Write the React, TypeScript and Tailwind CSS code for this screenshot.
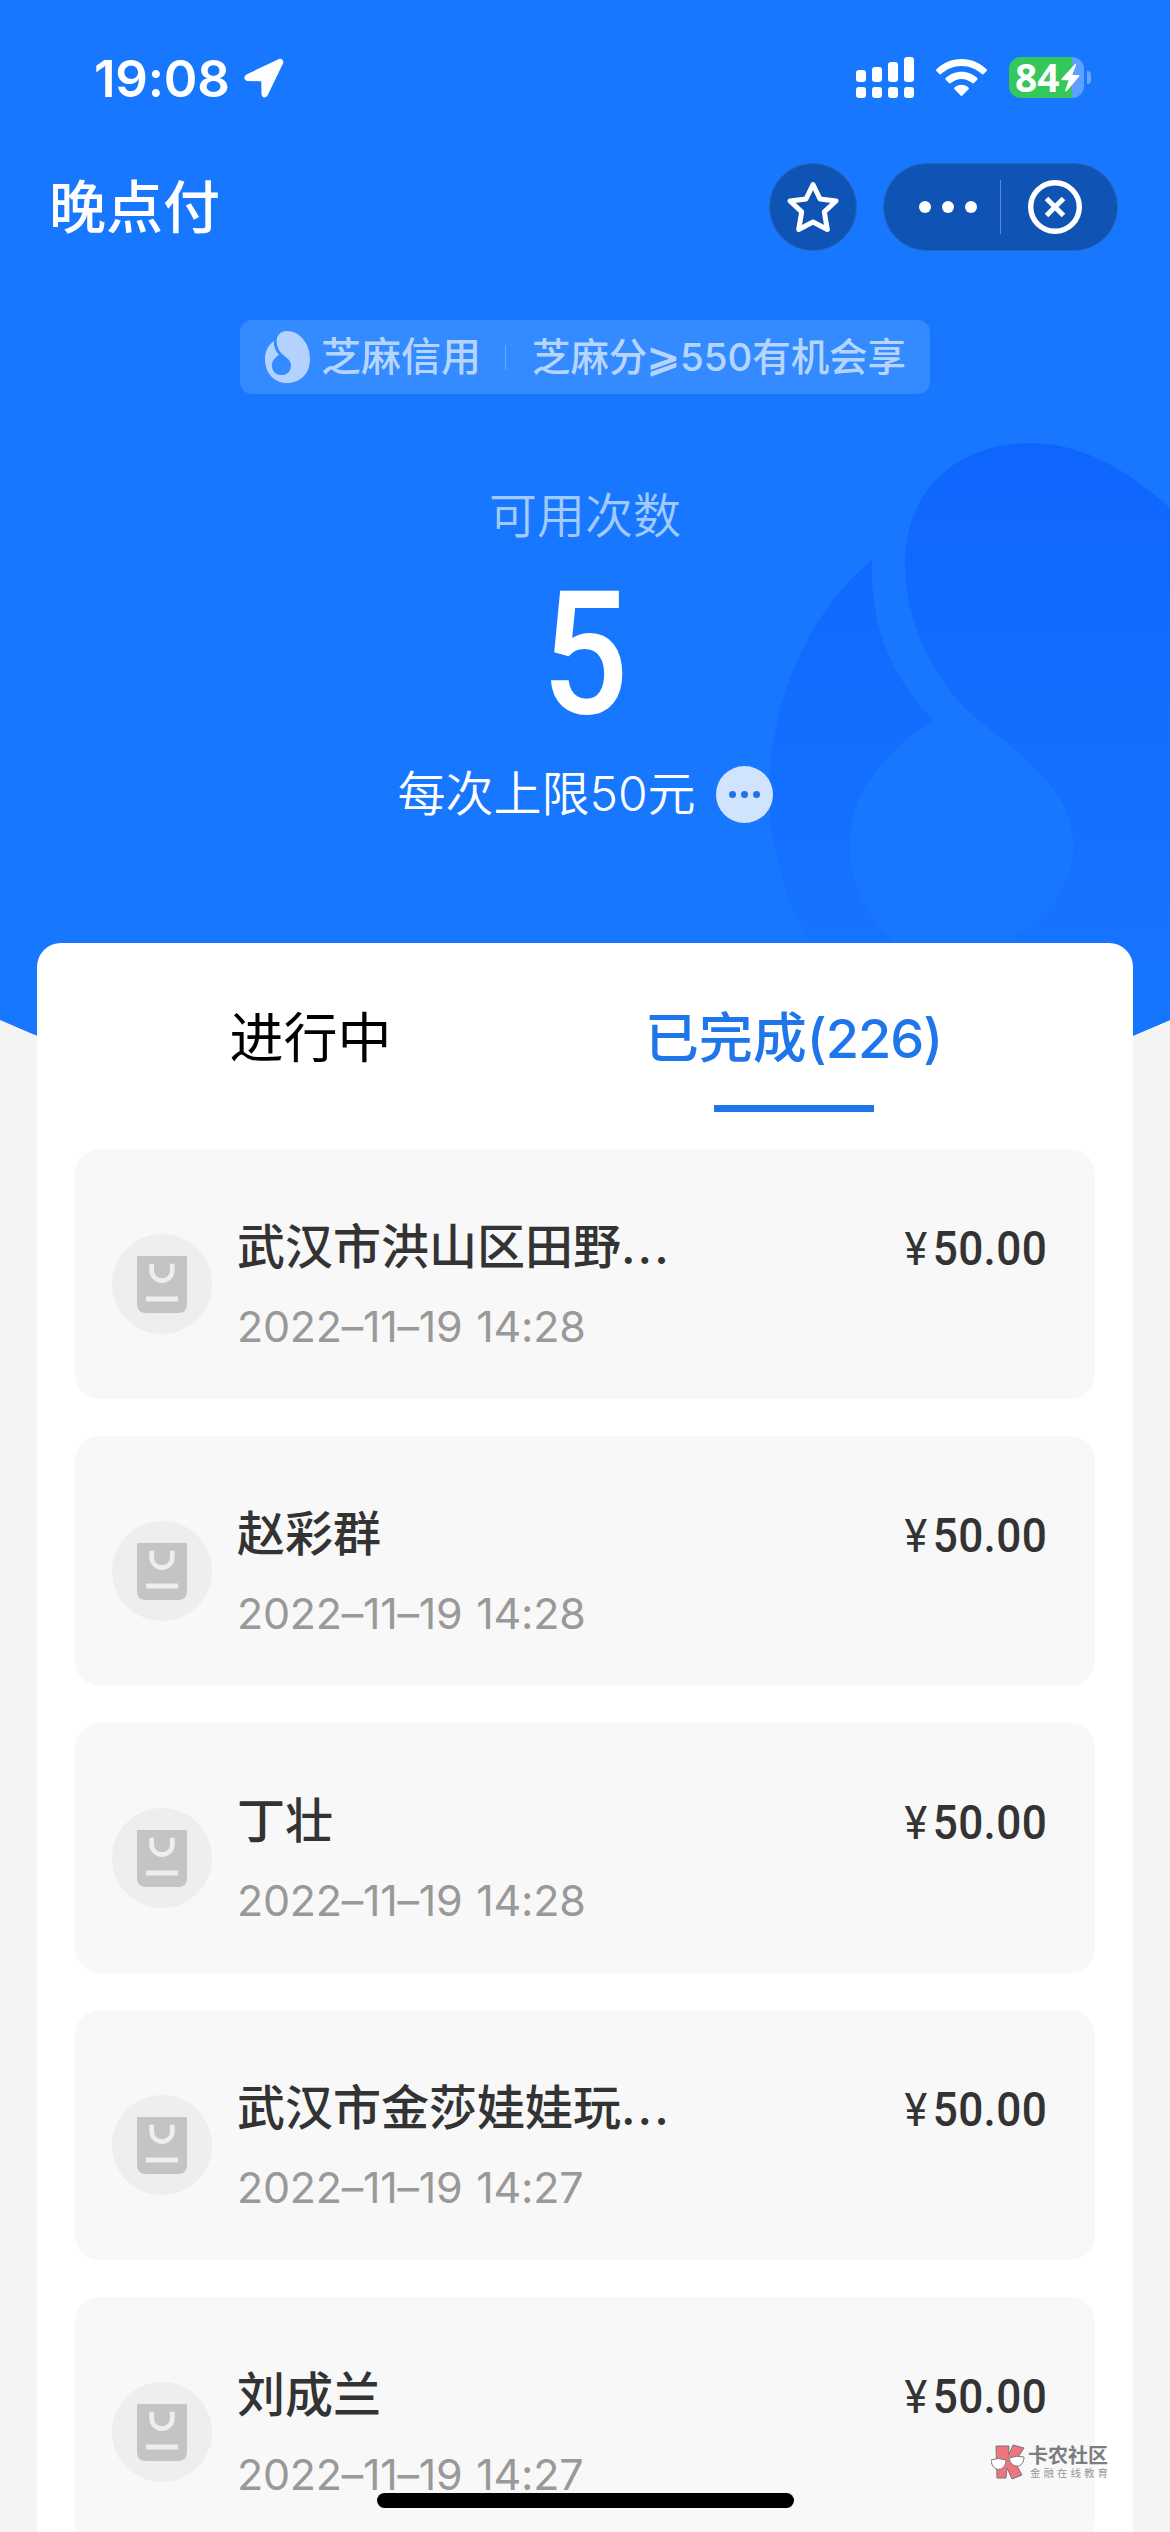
import React from 'react';

interface Order {
  name: string;
  truncated?: boolean;
  time: string;
  amount: string;
}

const orders: Order[] = [
  { name: '武汉市洪山区田野', truncated: true, time: '2022–11–19 14:28', amount: '50.00' },
  { name: '赵彩群', time: '2022–11–19 14:28', amount: '50.00' },
  { name: '丁壮', time: '2022–11–19 14:28', amount: '50.00' },
  { name: '武汉市金莎娃娃玩', truncated: true, time: '2022–11–19 14:27', amount: '50.00' },
  { name: '刘成兰', time: '2022–11–19 14:27', amount: '50.00' },
];

function StatusBar() {
  return (
    <div className="flex h-[156px] items-start justify-between pt-[57px] pr-[79px] pl-[94px]">
      <div className="flex h-[42px] items-center">
        <span className="w-[150px] text-[51px] leading-none font-semibold tracking-[-0.2px] whitespace-nowrap">19:08</span>
        <svg width="40" height="40" viewBox="0 0 40 40" fill="white">
          <path d="M34.5 1.2 3 16.2c-4 2-3.2 6.6 1 6.8l12.5.2c.6 0 .8.3.8.8L17.5 36c.2 4.3 4.7 4.6 6.3 1L39 5.5C40.2 2.4 37.6-.2 34.5 1.2Z" />
        </svg>
      </div>
      <div className="flex h-[41px] items-start">
        <svg width="58" height="41" viewBox="0 0 58 41" fill="white">
          <rect x="0" y="13" width="10" height="12" rx="3" />
          <rect x="16" y="10" width="10" height="15" rx="3" />
          <rect x="32" y="5" width="10" height="20" rx="3" />
          <rect x="48" y="0" width="10" height="25" rx="3" />
          <rect x="0" y="30" width="10" height="11" rx="3" />
          <rect x="16" y="30" width="10" height="11" rx="3" />
          <rect x="32" y="30" width="10" height="11" rx="3" />
          <rect x="48" y="30" width="10" height="11" rx="3" />
        </svg>
        <svg className="mt-[2px] ml-[22px]" width="51" height="38" viewBox="0 0 51 38" fill="white">
          <path d="M25.5 0C15.5 0 7 4 .5 10.2c-.7.6-.7 1.2-.1 1.8l3 3.1c.6.5 1.1.5 1.7 0C10.8 10 17.5 7 25.5 7s14.7 3 20.4 8.1c.6.5 1.1.5 1.7 0l3-3.1c.6-.6.6-1.2-.1-1.8C44 4 35.5 0 25.5 0Z" />
          <path d="M25.5 12.8c-6.2 0-11.6 2.4-15.7 6.2-.6.6-.6 1.2 0 1.8l3.2 3.3c.6.6 1.2.6 1.8 0 3-2.6 6.5-4.2 10.7-4.2s7.7 1.6 10.7 4.2c.6.6 1.2.6 1.8 0l3.2-3.3c.6-.6.6-1.2 0-1.8-4.1-3.8-9.5-6.2-15.7-6.2Z" />
          <path d="M25.5 25.8c-2.7 0-5 1-6.9 2.6-.7.6-.7 1.2-.1 1.8l6.1 6.3c.6.6 1.2.6 1.8 0l6.1-6.3c.6-.6.6-1.2-.1-1.8-1.9-1.6-4.2-2.6-6.9-2.6Z" />
        </svg>
        <div className="ml-[22px] flex h-[41px] items-center">
          <div className="flex h-[41px] w-[75px] items-center rounded-[12px] bg-linear-to-r from-[#34c759] from-84% to-[#5ea0ff] to-84% pl-[6px]">
            <span className="w-[46px] pb-[2px] font-['Noto_Sans',sans-serif] text-[39px] leading-[39px] font-bold">84</span>
            <svg width="19" height="28" viewBox="0 0 19 28" fill="white">
              <path d="M13.6.4.8 14.6c-.8 1-.5 1.7.6 1.7h6.2L4.3 26c-.4 1.4.6 1.8 1.5.9L18 12.7c.8-1 .5-1.8-.6-1.8h-6.2L15 1.3c.4-1.2-.5-1.8-1.4-.9Z" />
            </svg>
          </div>
          <div className="ml-[3px] h-[13px] w-[4px] rounded-r-full bg-white/35" />
        </div>
      </div>
    </div>
  );
}

function NavBar() {
  return (
    <div className="flex h-[102px] items-center justify-between pr-[52px] pl-[49px]">
      <h1 className="pt-[2px] text-[57px] leading-[80px] font-medium">晚点付</h1>
      <div className="flex items-center gap-[26px]">
        <div className="flex size-[88px] items-center justify-center rounded-full border border-[#2b62b3] bg-[#0f54b4]">
          <svg width="54" height="54" viewBox="0 0 54 54" fill="none" stroke="white" strokeWidth="5" strokeLinejoin="round">
            <path d="m27 4.5 7 14.5 16 2-11.7 10.8L41.3 49.5 27 42 12.7 49.5l3-17.7L4 21l16-2Z" />
          </svg>
        </div>
        <div className="flex h-[88px] w-[235px] items-center rounded-full border border-[#2b62b3] bg-[#0f54b4]">
          <div className="flex flex-1 items-center justify-center gap-[11px] pl-[12px]">
            <span className="size-[12px] rounded-full bg-white" />
            <span className="size-[12px] rounded-full bg-white" />
            <span className="size-[12px] rounded-full bg-white" />
          </div>
          <div className="h-[54px] w-px bg-[#5b8bd0]" />
          <div className="flex w-[116px] pl-[27px]">
            <svg width="54" height="54" viewBox="0 0 54 54" fill="none" stroke="white">
              <circle cx="27" cy="27" r="24.3" strokeWidth="5.4" />
              <path d="m18.5 18.5 17 17m0-17-17 17" strokeWidth="5" />
            </svg>
          </div>
        </div>
      </div>
    </div>
  );
}

function CreditBadge() {
  return (
    <div className="flex h-[74px] w-[690px] items-center rounded-[12px] bg-[#348aff] pl-[25px] text-[#b5d5ff]">
      <svg width="45" height="52" viewBox="0 0 45 52" fill="#b3d2ff">
        <path d="M22 0C35 0 45 13 45 28C45 43 35 52 22 52C9 52 0 42 0 28C0 20 3.5 14 8.8 10C8.6 15.5 10.3 20 14 23.7C10 26.5 6.9 29.7 6.9 34.4C6.9 40 11 44 16.5 44S26 40 26 34.4C26 30 22.8 27.5 17.4 23.3C13.7 19.8 11.6 15.1 11.6 10.3C11.6 4 16 0 22 0Z" />
      </svg>
      <span className="ml-[11px] w-[160px] text-[40px] leading-none font-medium whitespace-nowrap">芝麻信用</span>
      <div className="ml-[24px] h-[25px] w-px bg-[#6aa9ff]" />
      <span className="ml-[26px] text-[38.5px] leading-none font-medium tracking-[-0.1px] whitespace-nowrap">
        芝麻分<span className="font-bold">⩾</span>550有机会享
      </span>
    </div>
  );
}

function BagIcon() {
  return (
    <div className="flex size-[100px] shrink-0 items-center justify-center rounded-full bg-[#eeeeee]">
      <svg width="50" height="57" viewBox="0 0 50 57" fill="none">
        <path d="M1 0h48q1 0 1 1v47q0 9-9 9H9q-9 0-9-9V1q0-1 1-1Z" fill="#c4c4c4" />
        <path d="M14.7 7.7v6.7a10.3 10.3 0 0 0 20.6 0V7.7" stroke="#eeeeee" strokeWidth="4.7" />
        <path d="M9 43h32" stroke="#eeeeee" strokeWidth="5" />
      </svg>
    </div>
  );
}

function OrderRow({ name, truncated, time, amount }: Order) {
  return (
    <div className="flex h-[250px] shrink-0 items-start rounded-[25px] bg-[#f8f8f8] pr-[48px] pl-[37px]">
      <div className="mt-[85px]">
        <BagIcon />
      </div>
      <div className="mt-[66px] ml-[25px] flex-1">
        <p className="text-[48px] leading-[64px] font-medium text-[#333333]">
          {name}
          {truncated && <span className="tracking-[2px]">...</span>}
        </p>
        <p className="mt-[15px] text-[43px] leading-[64px] font-[370] tracking-[-0.25px] text-[#999999] [word-spacing:2px]">{time}</p>
      </div>
      <div className="mt-[68px] flex origin-right scale-x-[.92] items-baseline font-['Roboto',sans-serif] text-[48px] leading-[64px] text-[#333333]">
        <span className="mr-[6px] text-[47px]">¥</span>
        <span className="font-medium tracking-[0.4px]">{amount}</span>
      </div>
    </div>
  );
}

// Large faded sesame drop behind the quota figures
function HeroBackdrop() {
  return (
    <svg className="absolute top-0 left-0" width="1170" height="1200" viewBox="0 0 1170 1200">
      <defs>
        <linearGradient id="drop" gradientUnits="userSpaceOnUse" x1="0" y1="443" x2="0" y2="1000">
          <stop offset="0" stopColor="#0f66ff" />
          <stop offset="1" stopColor="#1675ff" />
        </linearGradient>
        <clipPath id="hero">
          <path d="M0 0H1170V1020Q900 1140 585 1140T0 1020Z" />
        </clipPath>
      </defs>
      <g clipPath="url(#hero)">
        <rect width="1170" height="1200" fill="#1777ff" />
        <path
          d="M1030 443C1082 443 1128 470 1170 508V1100H960V965C1030 935 1073 900 1073 846C1073 795 1035 765 973 716C930 675 905 620 905 563C905 490 957 443 1030 443Z"
          fill="url(#drop)"
        />
        <path
          d="M872 560C870 625 890 675 933 720C885 753 850 790 850 846C850 890 870 922 905 950H813C785 900 769 845 769 795C769 700 810 610 872 560Z"
          fill="url(#drop)"
        />
      </g>
    </svg>
  );
}

function Watermark() {
  return (
    <div className="absolute top-[2443px] left-[991px] flex items-start">
      <svg width="34" height="38" viewBox="0 0 34 38" stroke="#777777" strokeWidth="1">
        <path d="M5 3h13l-.5 9L22 2l11 3-9 14 7 13-10 4-5-11-1 10H6Z" fill="#ee7480" />
        <path d="M0 17q7-3 15 0c0 12-14 13-15 0ZM18 15q8-3 15-1c0 12-13 12-15 1Z" fill="white" />
      </svg>
      <div className="ml-[3px] flex flex-col pt-[3px] text-[#7d7d7d]">
        <span className="text-[20px] leading-[20px] font-bold">卡农社区</span>
        <span className="mt-[2px] ml-[2px] text-[10.5px] leading-[12px] tracking-[3px] text-[#999999]">金融在线教育</span>
      </div>
    </div>
  );
}

export default function App() {
  return (
    <div className="relative h-[2532px] w-[1170px] overflow-hidden bg-[#f4f4f4] font-['Inter','Noto_Sans_CJK_SC',sans-serif]">
      <HeroBackdrop />
      <div className="relative text-white">
        <StatusBar />
        <NavBar />
        <div className="flex h-[685px] flex-col items-center pt-[62px]">
          <CreditBadge />
          <p className="mt-[90px] text-[48px] leading-[64px] font-[350] text-[#a2caff]">可用次数</p>
          <p className="mt-[26px] origin-center scale-x-[.89] font-['Roboto',sans-serif] text-[172px] leading-[160px] font-medium">5</p>
          <div className="mt-[28px] flex items-center">
            <p className="text-[48px] leading-[64px] font-[350]">每次上限50元</p>
            <div className="ml-[20px] flex size-[57px] items-center justify-center gap-[5px] rounded-full bg-[#d1e4fd]">
              <span className="size-[7px] rounded-full bg-[#1f73e6]" />
              <span className="size-[7px] rounded-full bg-[#1f73e6]" />
              <span className="size-[7px] rounded-full bg-[#1f73e6]" />
            </div>
          </div>
        </div>
      </div>

      <div className="relative mx-[37px] h-[1600px] rounded-t-[24px] bg-white">
        <div className="flex h-[206px] pl-[32px] text-[54px] leading-[80px]">
          <div className="flex w-[483px] justify-center pt-[56px] text-black">进行中</div>
          <div className="flex w-[483px] flex-col items-center pt-[56px] font-medium text-[#1f76ea]">
            <span>
              已完成<span className="tracking-[-1px]">(226)</span>
            </span>
            <div className="mt-[26px] h-[7px] w-[160px] bg-[#1f76ea]" />
          </div>
        </div>
        <div className="flex flex-col gap-[37px] px-[38px]">
          {orders.map((order, i) => (
            <OrderRow key={i} {...order} />
          ))}
        </div>
      </div>

      <Watermark />
      <div className="absolute top-[2493px] left-[377px] h-[15px] w-[417px] rounded-full bg-black" />
    </div>
  );
}
